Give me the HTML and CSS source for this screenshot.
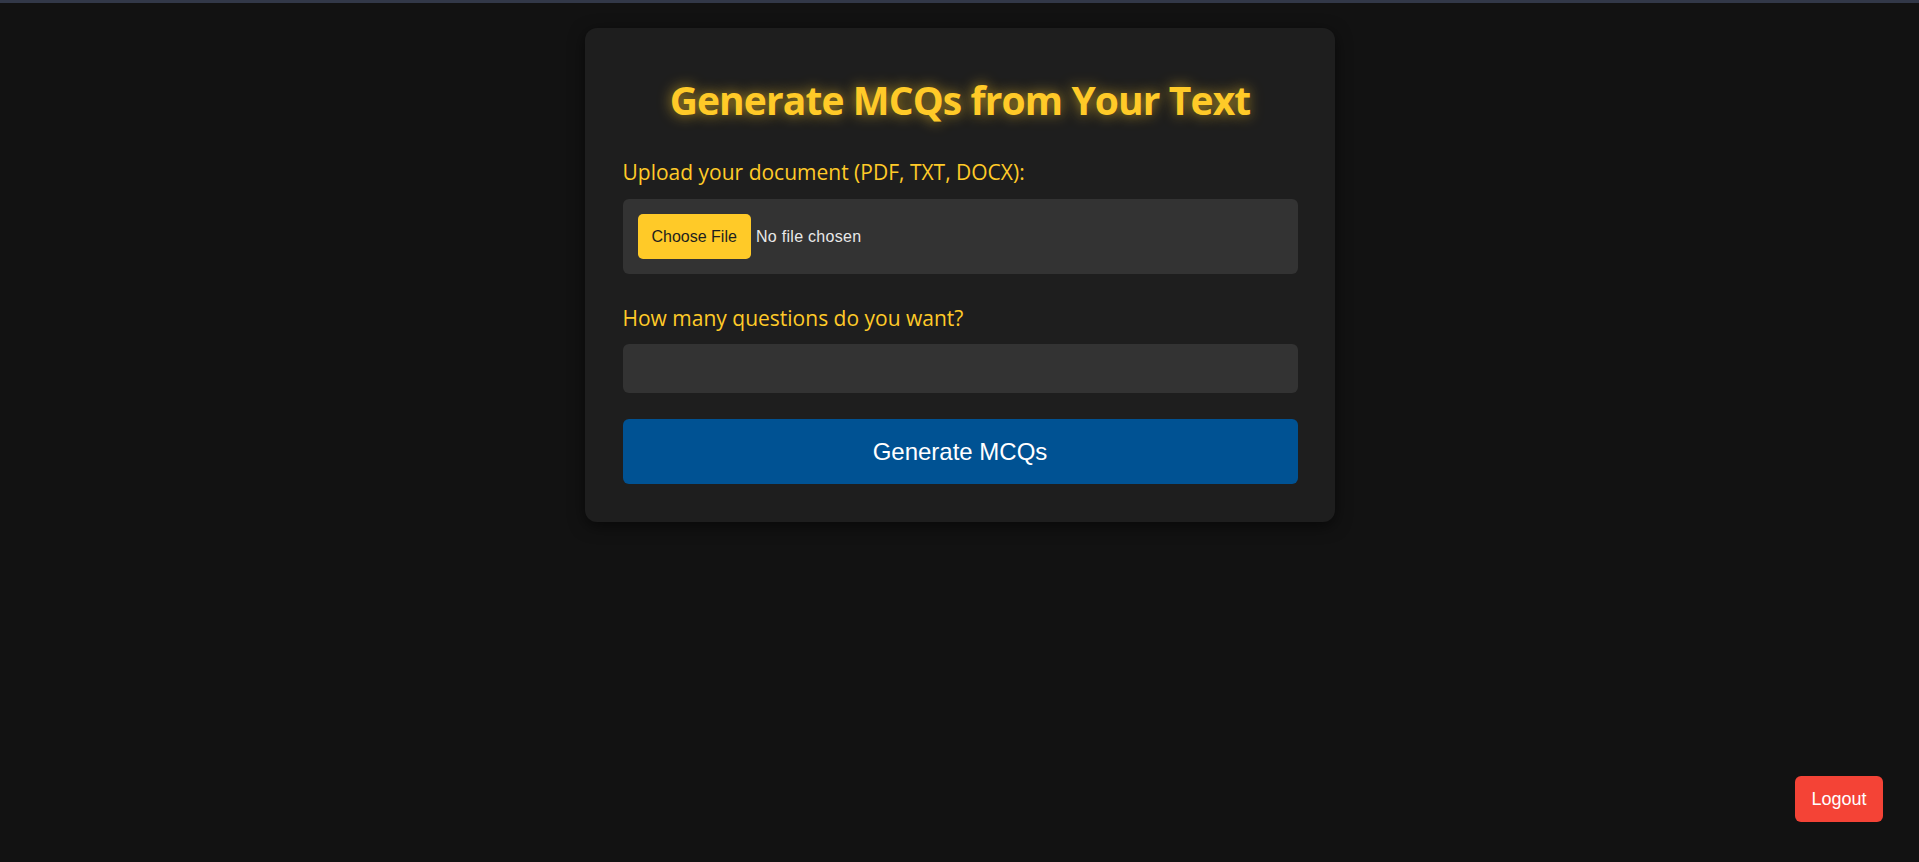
FILE: index.html
```html
<!DOCTYPE html>
<html lang="en">
<head>
<meta charset="utf-8">
<title>Generate MCQs</title>
<link rel="stylesheet" href="styles.css">
</head>
<body>
<div class="topbar"></div>
<main class="page">
  <form class="card">
    <h2 class="title">Generate MCQs from Your Text</h2>
    <label class="label">Upload your document (PDF, TXT, DOCX):</label>
    <div class="file-box">
      <button type="button" class="file-btn">Choose File</button>
      <span class="file-name">No file chosen</span>
    </div>
    <label class="label label-second">How many questions do you want?</label>
    <div class="number-input"></div>
    <button type="button" class="generate">Generate MCQs</button>
  </form>
</main>
<button type="button" class="logout">Logout</button>
</body>
</html>
```
FILE: styles.css
```css
* { box-sizing: border-box; }
html, body { margin: 0; padding: 0; }
body {
  background: #121212;
  height: 862px;
  overflow: hidden;
  font-family: "Open Sans", "Noto Sans", sans-serif;
}
.topbar {
  height: 3px;
  background: #323848;
}
.page {
  display: flex;
  justify-content: center;
  padding-top: 25px;
}
.card {
  width: 750px;
  background: #1e1e1e;
  border-radius: 12px;
  padding: 49px 37px 38px 38px;
  box-shadow: 0 4px 16px rgba(0, 0, 0, 0.55);
  display: flex;
  flex-direction: column;
}
.title {
  margin: 0 0 37px;
  text-align: center;
  font-size: 39px;
  line-height: 46px;
  font-weight: 700;
  color: #ffca28;
  letter-spacing: -0.9px;
  text-shadow: 0 0 14px rgba(255, 202, 40, 0.7);
}
.label {
  display: block;
  color: #ffca28;
  font-size: 21px;
  line-height: 24px;
  margin-bottom: 15px;
}
.label-second {
  margin-top: 32px;
  margin-bottom: 14px;
}
.file-box {
  height: 75px;
  background: #333333;
  border-radius: 6px;
  padding: 15px;
  display: flex;
  align-items: center;
  gap: 5px;
}
.file-btn {
  height: 45px;
  padding: 0 14px;
  border: none;
  border-radius: 5px;
  background: #ffca28;
  color: #1e1e1e;
  font-family: "Liberation Sans", Arial, sans-serif;
  font-size: 16px;
}
.file-name {
  color: #e8e8e8;
  font-family: "Liberation Sans", Arial, sans-serif;
  font-size: 16px;
  letter-spacing: 0.3px;
}
.number-input {
  height: 49px;
  background: #333333;
  border-radius: 6px;
}
.generate {
  margin-top: 26px;
  height: 65px;
  border: none;
  border-radius: 6px;
  background: #005293;
  color: #ffffff;
  font-family: "Liberation Sans", Arial, sans-serif;
  font-size: 24px;
}
.logout {
  position: fixed;
  right: 36px;
  bottom: 40px;
  width: 88px;
  height: 46px;
  border: none;
  border-radius: 6px;
  background: #f44336;
  color: #ffffff;
  font-family: "Liberation Sans", Arial, sans-serif;
  font-size: 18px;
}
```
